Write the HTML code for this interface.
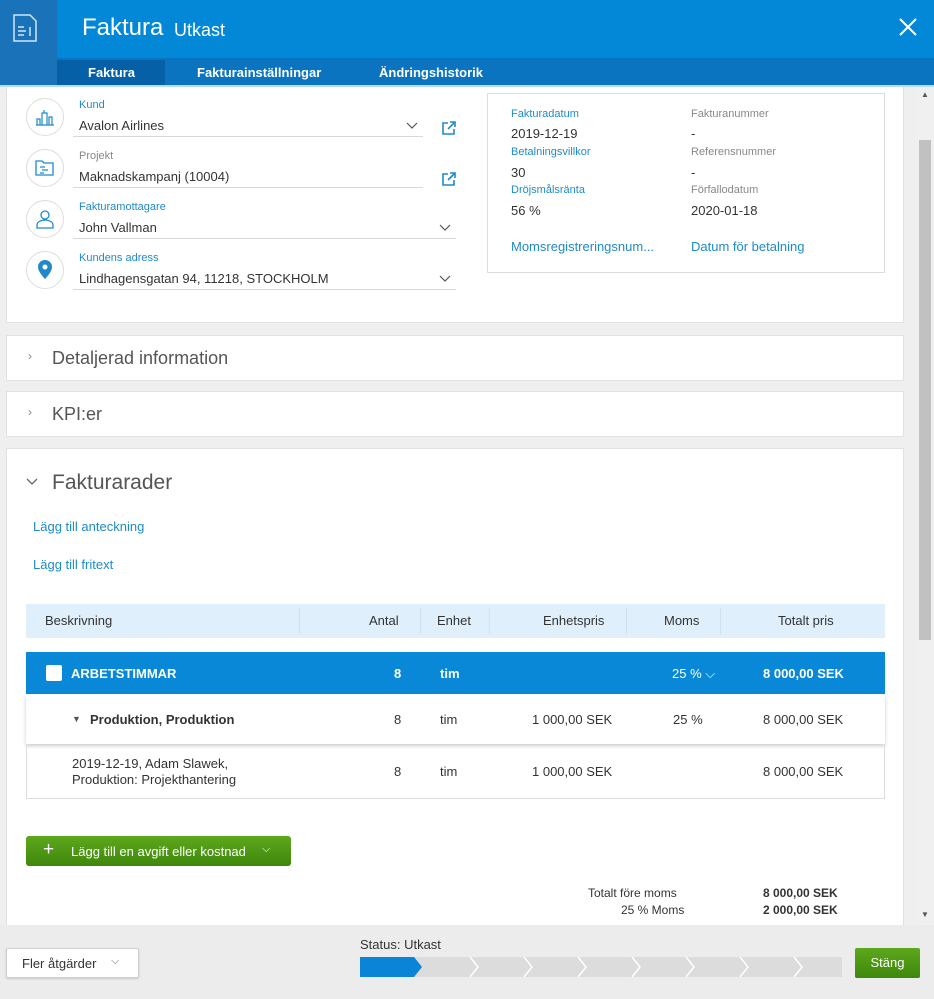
<!DOCTYPE html>
<html><head><meta charset="utf-8"><style>
*{box-sizing:border-box;margin:0;padding:0}
body{width:934px;height:999px;overflow:hidden;background:#efefef;font-family:"Liberation Sans",sans-serif;color:#333;position:relative;font-size:13px}
.a{position:absolute}
.lbl{font-size:11px;color:#1f8ac9}
.lblg{font-size:11px;color:#888}
.val{font-size:13px;color:#333}
.circ{width:38px;height:38px;border:1px solid #ddd;border-radius:50%;background:#fff}
.line{height:1px;background:#d8d8d8}
.panel{background:#fff;border:1px solid #e2e2e2}
.th{font-size:13px;color:#333;top:613px}
.sep{width:1px;height:26px;background:#cfe2f0;top:608px}
</style></head><body>
<!-- header -->
<div class="a" style="left:0;top:0;width:934px;height:58px;background:#0288d6"></div>
<div class="a" style="left:0;top:58px;width:934px;height:27px;background:#0a74c0"></div>
<div class="a" style="left:0;top:0;width:57px;height:85px;background:#1a72b8"></div>
<svg class="a" style="left:13px;top:14px" width="24" height="28" viewBox="0 0 24 28" fill="none" stroke="#cfe6f7" stroke-width="1.5"><path d="M1 1h16l6 6v20H1z"/><path d="M5 13h6M5 17h8M5 21h6M17 13v9"/></svg>
<div class="a" style="left:82px;top:14px;font-size:24px;color:#fff">Faktura</div>
<div class="a" style="left:174px;top:20px;font-size:18px;color:#fff">Utkast</div>
<svg class="a" style="left:899px;top:18px" width="18" height="18" stroke="#fff" stroke-width="2"><path d="M1 1l16 16M17 1L1 17"/></svg>
<div class="a" style="left:57px;top:60px;width:108px;height:25px;background:#0660a8"></div>
<div class="a" style="left:88px;top:65px;font-size:13px;font-weight:bold;color:#fff">Faktura</div>
<div class="a" style="left:197px;top:65px;font-size:13px;font-weight:bold;color:#fff">Fakturainställningar</div>
<div class="a" style="left:379px;top:65px;font-size:13px;font-weight:bold;color:#fff">Ändringshistorik</div>
<div class="a" style="left:0;top:85px;width:934px;height:2px;background:#b7dcf5"></div>
<!-- scrollbar -->
<div class="a" style="left:916px;top:87px;width:18px;height:838px;background:#f0f0f0"></div>
<div class="a" style="left:919px;top:140px;width:12px;height:500px;background:#c1c1c1"></div>
<div class="a" style="left:921px;top:90px;font-size:8px;color:#555">▲</div>
<div class="a" style="left:921px;top:910px;font-size:8px;color:#555">▼</div>
<!-- panel1 -->
<div class="a panel" style="left:6px;top:87px;width:898px;height:236px;border-top:none"></div>
<div class="a circ" style="left:26px;top:98px"></div>
<div class="a circ" style="left:26px;top:149px"></div>
<div class="a circ" style="left:26px;top:200px"></div>
<div class="a circ" style="left:26px;top:251px"></div>
<svg class="a" style="left:35px;top:108px" width="20" height="18" stroke="#1f8ac9" stroke-width="1.2" fill="none"><path d="M1 17h18M2 17v-6h3v6M7 17V5h5v12M9 5V2M14 17v-8h3v8"/></svg>
<svg class="a" style="left:35px;top:160px" width="20" height="16" stroke="#1f8ac9" stroke-width="1.3" fill="none"><path d="M1 1h6l2 2h9v12H1z M5 7h5M7 10h6M5 13h4"/></svg>
<svg class="a" style="left:36px;top:209px" width="18" height="20" stroke="#1f8ac9" stroke-width="1.3" fill="none"><circle cx="9" cy="6" r="4"/><path d="M1 19v-3c0-3 4-5 8-5s8 2 8 5v3z"/></svg>
<svg class="a" style="left:38px;top:260px" width="14" height="19" fill="#1f8ac9"><path d="M7 0a7 7 0 0 1 7 7c0 5-7 12-7 12S0 12 0 7a7 7 0 0 1 7-7z"/><circle cx="7" cy="7" r="2.5" fill="#fff"/></svg>
<div class="a lbl" style="left:79px;top:99px">Kund</div>
<div class="a val" style="left:79px;top:118px">Avalon Airlines</div>
<div class="a line" style="left:73px;top:136px;width:350px"></div>
<div class="a lblg" style="left:79px;top:150px">Projekt</div>
<div class="a val" style="left:79px;top:169px">Maknadskampanj (10004)</div>
<div class="a line" style="left:73px;top:187px;width:350px"></div>
<div class="a lbl" style="left:79px;top:201px">Fakturamottagare</div>
<div class="a val" style="left:79px;top:220px">John Vallman</div>
<div class="a line" style="left:73px;top:238px;width:383px"></div>
<div class="a lbl" style="left:79px;top:252px">Kundens adress</div>
<div class="a val" style="left:79px;top:271px">Lindhagensgatan 94, 11218, STOCKHOLM</div>
<div class="a line" style="left:73px;top:289px;width:383px"></div>
<svg class="a" style="left:406px;top:122px" width="12" height="8" stroke="#555" fill="none" stroke-width="1.2"><path d="M1 1l5 5 5-5"/></svg>
<svg class="a" style="left:439px;top:224px" width="12" height="8" stroke="#555" fill="none" stroke-width="1.2"><path d="M1 1l5 5 5-5"/></svg>
<svg class="a" style="left:439px;top:275px" width="12" height="8" stroke="#555" fill="none" stroke-width="1.2"><path d="M1 1l5 5 5-5"/></svg>
<svg class="a" style="left:442px;top:121px" width="14" height="14" stroke="#1f8ac9" fill="none" stroke-width="1.6"><path d="M6 2H1v11h11V8M8 1h5v5M13 1L6 8"/></svg>
<svg class="a" style="left:442px;top:172px" width="14" height="14" stroke="#1f8ac9" fill="none" stroke-width="1.6"><path d="M6 2H1v11h11V8M8 1h5v5M13 1L6 8"/></svg>
<div class="a" style="left:487px;top:93px;width:398px;height:180px;border:1px solid #ddd;background:#fff"></div>
<div class="a lbl" style="left:511px;top:108px">Fakturadatum</div>
<div class="a val" style="left:511px;top:126px">2019-12-19</div>
<div class="a lbl" style="left:511px;top:146px">Betalningsvillkor</div>
<div class="a val" style="left:511px;top:165px">30</div>
<div class="a lbl" style="left:511px;top:184px">Dröjsmålsränta</div>
<div class="a val" style="left:511px;top:203px">56 %</div>
<div class="a lblg" style="left:691px;top:108px">Fakturanummer</div>
<div class="a val" style="left:691px;top:126px">-</div>
<div class="a lblg" style="left:691px;top:146px">Referensnummer</div>
<div class="a val" style="left:691px;top:165px">-</div>
<div class="a lblg" style="left:691px;top:184px">Förfallodatum</div>
<div class="a val" style="left:691px;top:203px">2020-01-18</div>
<div class="a" style="left:511px;top:239px;color:#1f8ac9;font-size:13px">Momsregistreringsnum...</div>
<div class="a" style="left:691px;top:239px;color:#1f8ac9;font-size:13px">Datum för betalning</div>
<!-- collapsibles -->
<div class="a panel" style="left:6px;top:335px;width:898px;height:46px"></div>
<div class="a" style="left:28px;top:349px;color:#888;font-size:12px">›</div>
<div class="a" style="left:52px;top:348px;font-size:18px;color:#555">Detaljerad information</div>
<div class="a panel" style="left:6px;top:391px;width:898px;height:46px"></div>
<div class="a" style="left:28px;top:405px;color:#888;font-size:12px">›</div>
<div class="a" style="left:52px;top:404px;font-size:18px;color:#555">KPI:er</div>
<div class="a panel" style="left:6px;top:448px;width:898px;height:480px;border-bottom:none"></div>
<svg class="a" style="left:26px;top:478px" width="12" height="8" stroke="#666" fill="none" stroke-width="1.3"><path d="M1 1l5 5 5-5"/></svg>
<div class="a" style="left:52px;top:471px;font-size:21px;color:#555">Fakturarader</div>
<div class="a" style="left:33px;top:519px;color:#1f8ac9">Lägg till anteckning</div>
<div class="a" style="left:33px;top:557px;color:#1f8ac9">Lägg till fritext</div>
<!-- table -->
<div class="a" style="left:26px;top:604px;width:859px;height:34px;background:#dfeffb"></div>
<div class="a th" style="left:45px">Beskrivning</div>
<div class="a sep" style="left:299px"></div>
<div class="a th" style="left:369px">Antal</div>
<div class="a sep" style="left:420px"></div>
<div class="a th" style="left:437px">Enhet</div>
<div class="a sep" style="left:489px"></div>
<div class="a th" style="left:543px">Enhetspris</div>
<div class="a sep" style="left:626px"></div>
<div class="a th" style="left:664px">Moms</div>
<div class="a sep" style="left:720px"></div>
<div class="a th" style="left:778px">Totalt pris</div>
<div class="a" style="left:26px;top:652px;width:859px;height:42px;background:#0a88d8"></div>
<div class="a" style="left:46px;top:665px;width:16px;height:16px;background:#fff;border-radius:2px"></div>
<div class="a" style="left:71px;top:666px;color:#fff;font-weight:bold">ARBETSTIMMAR</div>
<div class="a" style="left:394px;top:666px;color:#fff;font-weight:bold">8</div>
<div class="a" style="left:440px;top:666px;color:#fff;font-weight:bold">tim</div>
<div class="a" style="left:672px;top:666px;color:#fff">25 % ⌵</div>
<div class="a" style="left:763px;top:666px;color:#fff;font-weight:bold">8 000,00 SEK</div>
<div class="a" style="left:26px;top:694px;width:859px;height:50px;background:#fff;box-shadow:0 2px 4px rgba(0,0,0,.2)"></div>
<div class="a" style="left:72px;top:714px;font-size:9px;color:#555">▼</div>
<div class="a" style="left:90px;top:712px;font-weight:bold">Produktion, Produktion</div>
<div class="a" style="left:394px;top:712px">8</div>
<div class="a" style="left:440px;top:712px">tim</div>
<div class="a" style="left:532px;top:712px">1 000,00 SEK</div>
<div class="a" style="left:673px;top:712px">25 %</div>
<div class="a" style="left:763px;top:712px">8 000,00 SEK</div>
<div class="a" style="left:26px;top:744px;width:859px;height:55px;border:1px solid #ddd;border-top:none"></div>
<div class="a" style="left:72px;top:756px;line-height:16px">2019-12-19, Adam Slawek,<br>Produktion: Projekthantering</div>
<div class="a" style="left:394px;top:764px">8</div>
<div class="a" style="left:440px;top:764px">tim</div>
<div class="a" style="left:532px;top:764px">1 000,00 SEK</div>
<div class="a" style="left:763px;top:764px">8 000,00 SEK</div>
<!-- add button -->
<div class="a" style="left:26px;top:836px;width:265px;height:30px;background:linear-gradient(#5da81c,#3f870c);border-radius:3px;color:#fff"><span class="a" style="left:17px;top:3px;font-size:19px">+</span><span class="a" style="left:45px;top:8px">Lägg till en avgift eller kostnad</span><span class="a" style="left:236px;top:7px;font-size:11px">⌵</span></div>
<div class="a" style="left:588px;top:886px;font-size:12px">Totalt före moms</div>
<div class="a" style="left:621px;top:903px;font-size:12px">25 % Moms</div>
<div class="a" style="left:763px;top:886px;font-size:12px;font-weight:bold">8 000,00 SEK</div>
<div class="a" style="left:763px;top:903px;font-size:12px;font-weight:bold">2 000,00 SEK</div>
<!-- footer -->
<div class="a" style="left:0;top:925px;width:934px;height:74px;background:#ececec"></div>
<div class="a" style="left:6px;top:948px;width:133px;height:30px;background:#fff;border:1px solid #d0d0d0;border-radius:2px;box-shadow:0 1px 2px rgba(0,0,0,.15)"><span class="a" style="left:15px;top:7px">Fler åtgärder</span><span class="a" style="left:104px;top:6px;font-size:11px;color:#666">⌵</span></div>
<div class="a" style="left:360px;top:937px">Status: Utkast</div>
<div class="a" style="left:360px;top:957px;width:482px;height:20px;background:#dcdcdc"></div>
<svg class="a" style="left:360px;top:957px" width="482" height="20"><path d="M0 0h54l8 10-8 10H0z" fill="#0a84d6"/><g stroke="#fff" stroke-width="1.5" fill="none"><path d="M110 0l8 10-8 10M164 0l8 10-8 10M218 0l8 10-8 10M272 0l8 10-8 10M326 0l8 10-8 10M380 0l8 10-8 10M434 0l8 10-8 10"/></g></svg>
<div class="a" style="left:855px;top:948px;width:65px;height:30px;background:linear-gradient(#5da81c,#3f870c);border-radius:2px;color:#fff;text-align:center;line-height:30px">Stäng</div>
</body></html>
